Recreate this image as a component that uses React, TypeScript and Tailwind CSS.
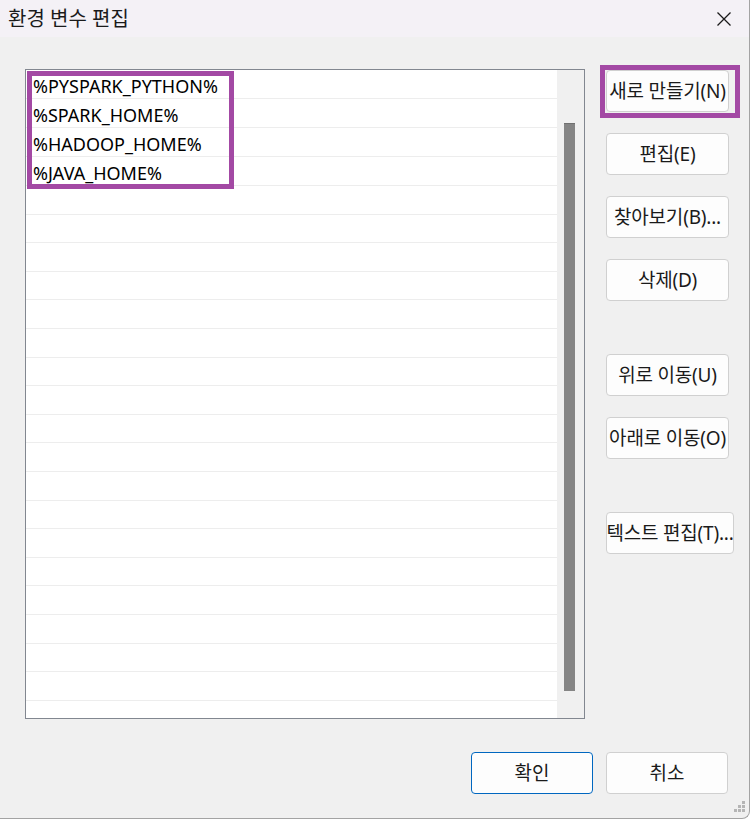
const font = { fontFamily: "'Noto Sans', 'Noto Sans CJK KR', sans-serif" };

const values = ["%PYSPARK_PYTHON%", "%SPARK_HOME%", "%HADOOP_HOME%", "%JAVA_HOME%"];

const sideButtons: { label: string; gap: string; wide?: boolean; marked?: boolean }[] = [
  { label: "새로 만들기(N)", gap: "mt-0", marked: true },
  { label: "편집(E)", gap: "mt-[21px]" },
  { label: "찾아보기(B)...", gap: "mt-[21px]" },
  { label: "삭제(D)", gap: "mt-[21px]" },
  { label: "위로 이동(U)", gap: "mt-[53px]" },
  { label: "아래로 이동(O)", gap: "mt-[21px]" },
  { label: "텍스트 편집(T)...", gap: "mt-[53px]", wide: true },
];

function CloseIcon() {
  return (
    <svg width="16" height="16" viewBox="0 0 16 16" className="text-[#1a1a1a]">
      <path d="M1.5 1.5 L14.5 14.5 M14.5 1.5 L1.5 14.5" stroke="currentColor" strokeWidth="1.3" />
    </svg>
  );
}

function Grip() {
  return (
    <svg width="12" height="12" viewBox="0 0 12 12" className="absolute bottom-[5px] right-[3px]">
      <g fill="#b5b5b5">
        <rect x="8" y="0" width="3" height="3" />
        <rect x="4" y="4" width="3" height="3" />
        <rect x="8" y="4" width="3" height="3" />
        <rect x="0" y="8" width="3" height="3" />
        <rect x="4" y="8" width="3" height="3" />
        <rect x="8" y="8" width="3" height="3" />
      </g>
    </svg>
  );
}

export default function App() {
  const rows = Array.from({ length: 23 }, (_, i) => values[i] ?? "");
  const btn =
    "flex h-[42px] items-center justify-center whitespace-nowrap rounded-[4px] border border-[#d0d0d0] bg-[#fdfdfd] text-[19px] tracking-[-0.2px] text-[#1a1a1a]";

  return (
    <div className="h-[820px] w-[751px] bg-white" style={font}>
      <div className="relative h-[819px] w-[750px] overflow-hidden rounded-br-[8px] border-r border-b border-[#a3a3a3] bg-[#f0f0f0]">
        <div className="flex h-[37px] items-center justify-between bg-[#f4f1f6] pl-[8px] pr-[17px]">
          <span className="text-[20px] text-[#1a1a1a]">환경 변수 편집</span>
          <CloseIcon />
        </div>

        <div className="flex pl-[25px] pt-[32px]">
          <div className="relative h-[650px] w-[560px] border border-[#828790] bg-white">
            <div className="flex h-full">
              <div className="h-full w-[531px] overflow-hidden">
                {rows.map((v, i) => (
                  <div
                    key={i}
                    className={`flex ${i < 4 ? "h-[29px]" : "h-[28.6px]"} items-center border-b border-[#ededed] pl-[7px] pt-[4px] text-[18px] leading-none text-black`}
                  >
                    {v}
                  </div>
                ))}
              </div>
              <div className="h-full w-[27px] bg-[#f0f0f0] pt-[53px]">
                <div className="ml-[7px] h-[568px] w-[11px] border-t border-[#707070] bg-[#858585]" />
              </div>
            </div>
            <div className="pointer-events-none absolute left-[1px] top-[1px] h-[118px] w-[207px] border-[5px] border-[#a349a4]" />
          </div>

          <div className="ml-[21px] flex flex-col pt-[1px]">
            {sideButtons.map((b) => (
              <div key={b.label} className={`relative ${b.gap}`}>
                <div className={`${btn} ${b.wide ? "w-[128px]" : "w-[123px]"}`}>{b.label}</div>
                {b.marked && (
                  <div className="pointer-events-none absolute -bottom-[6px] -left-[6px] -right-[6px] -top-[5px] border-[5px] border-[#a349a4]" />
                )}
              </div>
            ))}
          </div>
        </div>

        <div className="flex justify-end gap-[13px] pr-[21px] pt-[33px]">
          <div className="flex h-[42px] w-[122px] items-center justify-center rounded-[4px] border border-[#0067c0] bg-[#fdfdfd] text-[19px] text-[#1a1a1a]">
            확인
          </div>
          <div className="flex h-[42px] w-[122px] items-center justify-center rounded-[4px] border border-[#d0d0d0] bg-[#fdfdfd] text-[19px] text-[#1a1a1a]">
            취소
          </div>
        </div>

        <Grip />
      </div>
    </div>
  );
}
